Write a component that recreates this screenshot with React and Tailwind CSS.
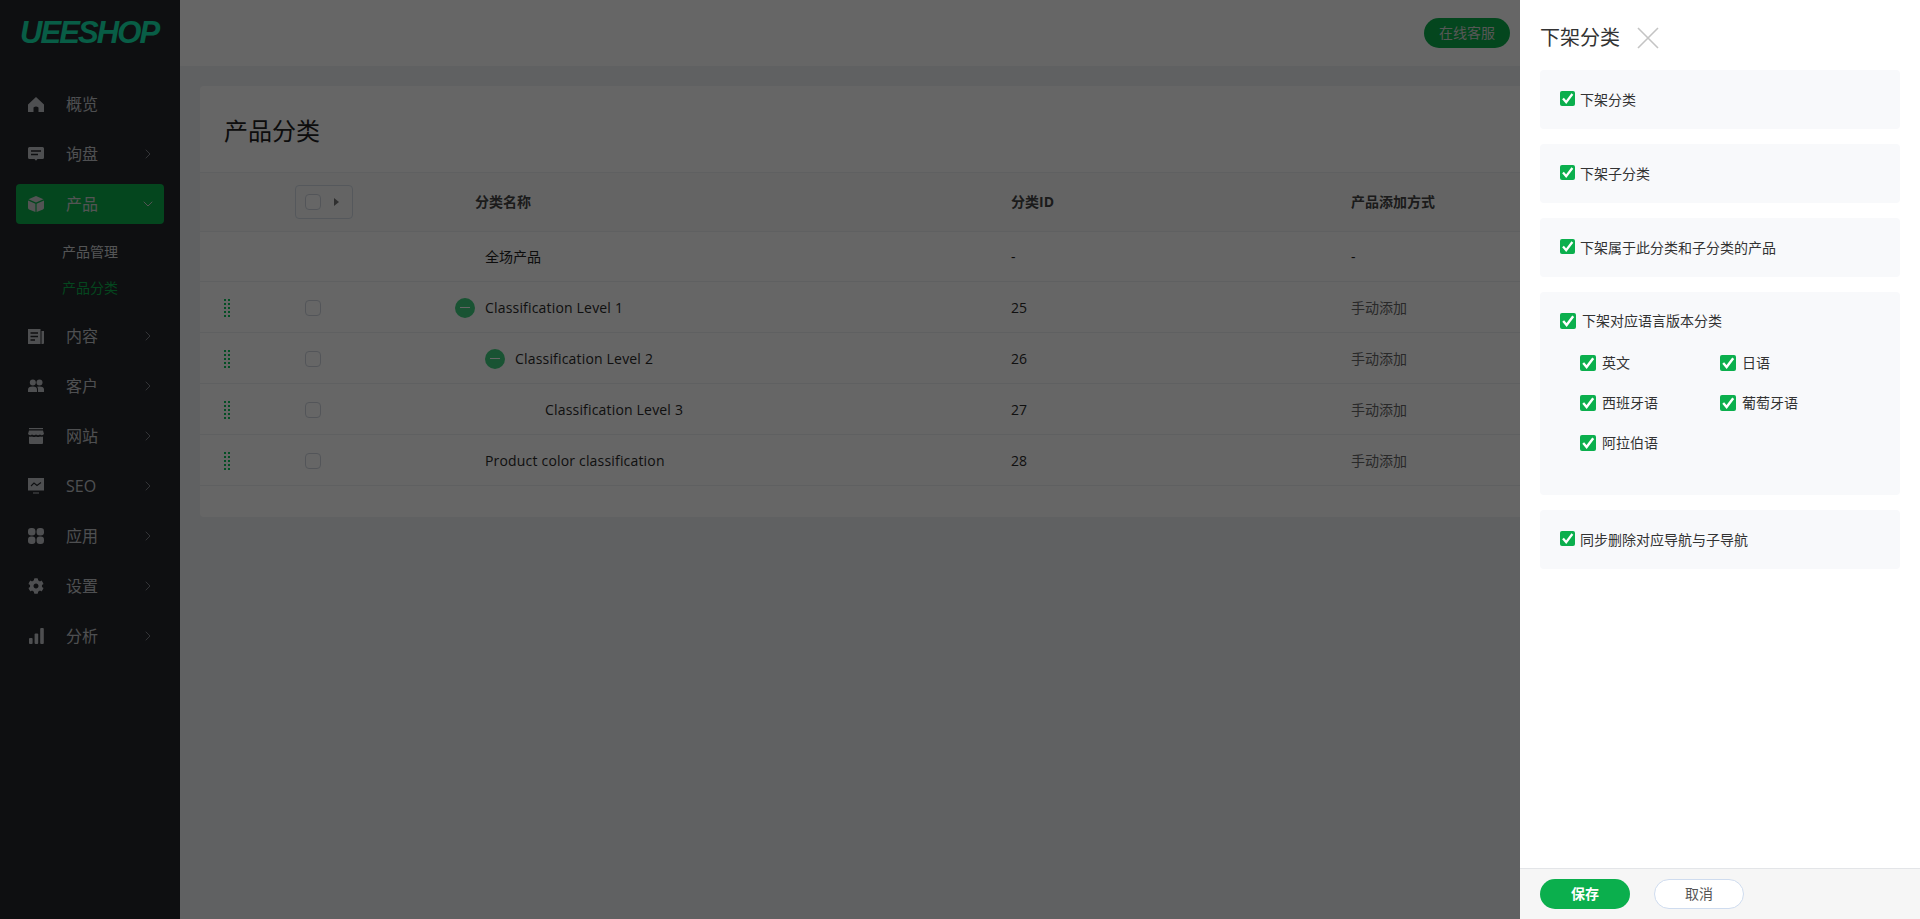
import { FaCog } from 'react-icons/fa'
import { ChevronRight, ChevronDown } from 'lucide-react'

const font = { fontFamily: '"Open Sans", "Noto Sans CJK SC", sans-serif' }

const HomeIcon = () => (
  <svg viewBox="0 0 16 16" className="w-4 h-4" fill="currentColor">
    <path d="M8 1 L16 8.5 V16 H10.5 V11.5 Q8 9.5 5.5 11.5 V16 H0 V8.5 Z" />
  </svg>
)
const MessageIcon = () => (
  <svg viewBox="0 0 16 16" className="w-4 h-4">
    <path fill="currentColor" d="M1.5 1 H14.5 Q16 1 16 2.5 V11.5 Q16 13 14.5 13 H9.5 L8 14.8 L6.5 13 H1.5 Q0 13 0 11.5 V2.5 Q0 1 1.5 1 Z" />
    <path stroke="#23262b" strokeWidth="1.4" fill="none" d="M3 5 H13 M3 8.5 H10" />
  </svg>
)
const BoxIcon = () => (
  <svg viewBox="0 0 16 16" className="w-4 h-4" fill="currentColor">
    <path d="M8 0 L15.5 3.2 L8 6.5 L.5 3.2 Z" />
    <path d="M0 4.5 L7.4 7.7 V16 L1 13.4 Q0 13 0 12 Z" />
    <path d="M16 4.5 L8.6 7.7 V16 L15 13.4 Q16 13 16 12 Z" />
  </svg>
)
const DocIcon = () => (
  <svg viewBox="0 0 16 16" className="w-4 h-4">
    <path fill="currentColor" d="M0 1 H12.5 V16 H0 Z M13.5 3 H16 V15 Q16 16 15 16 H13.5 Z" />
    <path stroke="#23262b" strokeWidth="1.3" fill="none" d="M2.5 5 H10 M2.5 8.5 H10 M2.5 12 H7" />
  </svg>
)
const UsersIcon = () => (
  <svg viewBox="0 0 16 16" className="w-4 h-4" fill="currentColor">
    <circle cx="4.8" cy="4.5" r="3" />
    <circle cx="11.5" cy="4.5" r="3" />
    <path d="M0 14 V11.5 Q0 8.5 4.8 8.5 Q9 8.5 9 11.5 V14 Z" />
    <path d="M10 14 V11 Q10 9.5 9 8.8 Q10 8.5 11.5 8.5 Q16 8.5 16 11.5 V14 Z" />
  </svg>
)
const ShopIcon = () => (
  <svg viewBox="0 0 16 16" className="w-4 h-4" fill="currentColor">
    <path d="M1 0 H15 V1.2 H1 Z" />
    <path d="M1 2.5 H15 L16 6 Q14 8 12 6.6 Q10 8 8 6.6 Q6 8 4 6.6 Q2 8 0 6 Z" />
    <path d="M1 8.5 Q2.5 9.2 4 8.4 Q6 9.4 8 8.4 Q10 9.4 12 8.4 Q13.5 9.2 15 8.5 V15 Q15 16 14 16 H2 Q1 16 1 15 Z" />
  </svg>
)
const MonitorIcon = () => (
  <svg viewBox="0 0 16 16" className="w-4 h-4">
    <path fill="currentColor" d="M0 0 H16 V12.5 H0 Z M5 14.5 H11 V15.5 H5 Z" />
    <path stroke="#23262b" strokeWidth="1.1" fill="none" d="M3 8 L6 5 L9 7.5 L13 4.5" />
  </svg>
)
const AppsIcon = () => (
  <svg viewBox="0 0 16 16" className="w-4 h-4" fill="currentColor">
    <rect x="0" y="0" width="7.4" height="7.4" rx="3.2" />
    <rect x="8.6" y="0" width="7.4" height="7.4" rx="3.2" />
    <rect x="0" y="8.6" width="7.4" height="7.4" rx="3.2" />
    <rect x="8.6" y="8.6" width="7.4" height="7.4" rx="3.2" />
  </svg>
)
const BarsIcon = () => (
  <svg viewBox="0 0 16 16" className="w-4 h-4" fill="currentColor">
    <rect x="1" y="10" width="3.6" height="6" rx="1" />
    <rect x="6.6" y="5.5" width="3.6" height="10.5" rx="1" />
    <rect x="12.2" y="0" width="3.6" height="16" rx="1" />
  </svg>
)
const GearIcon = () => <FaCog className="w-4 h-4" />

const DragHandle = () => (
  <svg viewBox="0 0 6 18" className="w-[6px] h-[18px]" fill="#0cc45a">
    {[0, 4, 8, 12, 16].map((y) => (
      <g key={y}>
        <rect x="0" y={y} width="2" height="2" />
        <rect x="4" y={y} width="2" height="2" />
      </g>
    ))}
  </svg>
)

const navTop = [
  { label: '概览', icon: HomeIcon },
  { label: '询盘', icon: MessageIcon, arrow: true },
]
const navBottom = [
  { label: '内容', icon: DocIcon },
  { label: '客户', icon: UsersIcon },
  { label: '网站', icon: ShopIcon },
  { label: 'SEO', icon: MonitorIcon },
  { label: '应用', icon: AppsIcon },
  { label: '设置', icon: GearIcon },
  { label: '分析', icon: BarsIcon },
]

function NavItem({ label, icon: Icon, arrow = true }) {
  return (
    <div className="h-10 mx-4 pl-3 pr-2 flex items-center text-[#c4c6cb]">
      <span className="w-4 h-4 flex items-center justify-center"><Icon /></span>
      <span className="ml-[22px] text-base flex-1">{label}</span>
      {arrow && <ChevronRight className="w-4 h-4 text-[#80838a]" strokeWidth={1.5} />}
    </div>
  )
}

function Sidebar() {
  return (
    <aside className="w-[180px] shrink-0 bg-[#23262b] flex flex-col h-full">
      <div className="h-[84px] pl-[20px] pt-[14px]">
        <span className="text-[31px] font-bold italic leading-[38px] tracking-[-1.9px] text-[#16e8ae]" style={{ fontFamily: '"Liberation Sans", sans-serif' }}>UEESHOP</span>
      </div>
      <div className="flex flex-col gap-[10px]">
        <NavItem {...navTop[0]} arrow={false} />
        <NavItem {...navTop[1]} />
        <div className="h-10 mx-4 pl-3 pr-2 flex items-center rounded bg-[#0baf4d] text-[#d0d2d2]">
          <BoxIcon />
          <span className="ml-[22px] text-base flex-1">产品</span>
          <ChevronDown className="w-4 h-4" strokeWidth={1.5} />
        </div>
      </div>
      <div className="mt-[10px] mb-[10px] pl-[62px] text-sm">
        <div className="h-9 leading-9 text-[#d2d4d8]">产品管理</div>
        <div className="h-9 leading-9 text-[#0baf4d]">产品分类</div>
      </div>
      <div className="flex flex-col gap-[10px]">
        {navBottom.map((n) => <NavItem key={n.label} {...n} />)}
      </div>
    </aside>
  )
}

const rows = [
  { name: 'Classification Level 1', id: '25', depth: 0, open: true },
  { name: 'Classification Level 2', id: '26', depth: 1, open: true },
  { name: 'Classification Level 3', id: '27', depth: 2 },
  { name: 'Product color classification', id: '28', depth: 0 },
]

const Box = () => <span className="block w-4 h-4 border border-[#cfd5df] rounded-sm bg-white" />

function TableRow({ r }) {
  return (
    <div className="h-[51px] pt-px flex items-center border-b border-[#eef0f3] text-sm text-[#2a2a2a]">
      <div className="w-[105px] pl-6 flex items-center"><DragHandle /></div>
      <div className="w-[170px]"><Box /></div>
      <div className="w-[536px] flex items-center tracking-[0.18px]" style={{ paddingLeft: 10 + r.depth * 30 }}>
        {r.open && (
          <span className="w-5 h-5 -ml-[30px] mr-[10px] rounded-full bg-[#3fd07f] flex items-center justify-center">
            <span className="block w-[10px] h-px bg-white" />
          </span>
        )}
        {r.name}
      </div>
      <div className="w-[340px]">{r.id}</div>
      <div className="flex-1 text-[#666]">手动添加</div>
    </div>
  )
}

function Main() {
  return (
    <div className="flex-1 flex flex-col min-w-0 bg-[#f1f3f5]">
      <header className="h-[66px] shrink-0 bg-white flex justify-end items-start pt-[18px] pr-[410px]">
        <span className="h-[30px] w-[86px] rounded-full bg-[#0baf4d] text-[#d8dad8] text-sm flex items-center justify-center">在线客服</span>
      </header>
      <div className="p-5">
        <div className="bg-white rounded h-[431px]">
          <h1 className="h-[86px] pl-6 pt-[29px] text-2xl leading-8 text-[#222]">产品分类</h1>
          <div className="h-[60px] flex items-center border-y border-[#eef0f3] bg-[#fafbfb] text-sm font-bold text-[#444]">
            <div className="w-[95px]" />
            <div className="w-[180px]">
              <div className="w-[58px] h-[34px] rounded border border-[#d5dbe6] flex items-center pl-[9px]">
                <Box />
                <span className="ml-[13px] w-0 h-0 border-y-[4px] border-y-transparent border-l-[5px] border-l-[#777]" />
              </div>
            </div>
            <div className="w-[536px]">分类名称</div>
            <div className="w-[340px]">分类ID</div>
            <div className="flex-1">产品添加方式</div>
          </div>
          <div className="h-[50px] flex items-center border-b border-[#eef0f3] text-sm text-[#222]">
            <div className="w-[275px]" />
            <div className="w-[536px] pl-[10px]">全场产品</div>
            <div className="w-[340px]">-</div>
            <div className="flex-1">-</div>
          </div>
          {rows.map((r) => <TableRow key={r.id} r={r} />)}
        </div>
      </div>
    </div>
  )
}

const GreenCheck = ({ small }) => (
  <span className={`${small ? 'w-[15px] h-[15px] -mt-[2px]' : 'w-4 h-4'} shrink-0 rounded-[2px] bg-[#0baf4d] block`}>
    <svg viewBox="0 0 16 16" className="w-full h-full" fill="none" stroke="#fff" strokeWidth="2.4">
      <path d="M3.2 8 L6.6 12 L13.2 3.2" />
    </svg>
  </span>
)

const panelRows = ['下架分类', '下架子分类', '下架属于此分类和子分类的产品']
const langs = ['英文', '日语', '西班牙语', '葡萄牙语', '阿拉伯语']

function Panel() {
  return (
    <div className="absolute top-0 right-0 bottom-0 w-[400px] bg-white flex flex-col">
      <div className="h-[70px] px-5 shrink-0 flex items-start pt-6">
        <span className="text-xl leading-[27px] text-[#333]">下架分类</span>
        <svg viewBox="0 0 22 22" className="w-[22px] h-[22px] ml-[17px] mt-[3px]" stroke="#c4c4c4" strokeWidth="1.6" fill="none">
          <path d="M1 1 L21 21 M21 1 L1 21" />
        </svg>
      </div>
      <div className="flex-1 px-5 flex flex-col gap-[15px] text-sm text-[#333]">
        {panelRows.map((t) => (
          <div key={t} className="h-[59px] rounded bg-[#f8f9fb] px-5 flex items-center gap-[5px]">
            <GreenCheck small />
            <span>{t}</span>
          </div>
        ))}
        <div className="h-[203px] rounded bg-[#f8f9fb] px-5 pt-[21px]">
          <div className="flex items-center gap-[6px] h-4">
            <GreenCheck />
            <span>下架对应语言版本分类</span>
          </div>
          <div className="mt-[26px] pl-5 grid grid-cols-[140px_140px] gap-y-6">
            {langs.map((l) => (
              <div key={l} className="flex items-center gap-[6px] h-4">
                <GreenCheck />
                <span>{l}</span>
              </div>
            ))}
          </div>
        </div>
        <div className="h-[59px] rounded bg-[#f8f9fb] px-5 flex items-center gap-[5px]">
          <GreenCheck small />
          <span>同步删除对应导航与子导航</span>
        </div>
      </div>
      <div className="h-[51px] shrink-0 border-t border-[#e3e5e8] bg-[#f6f6f6] px-5 flex items-center gap-6 text-sm">
        <button className="w-[90px] h-[30px] rounded-full bg-[#0baf4d] text-white font-bold">保存</button>
        <button className="w-[90px] h-[30px] rounded-full bg-white border border-[#cfdcef] text-[#555]">取消</button>
      </div>
    </div>
  )
}

export default function App() {
  return (
    <div className="relative w-screen h-screen overflow-hidden flex" style={font}>
      <Sidebar />
      <Main />
      {/* mask under the slide-in panel */}
      <div className="absolute inset-0 bg-black/60" />
      <Panel />
    </div>
  )
}
